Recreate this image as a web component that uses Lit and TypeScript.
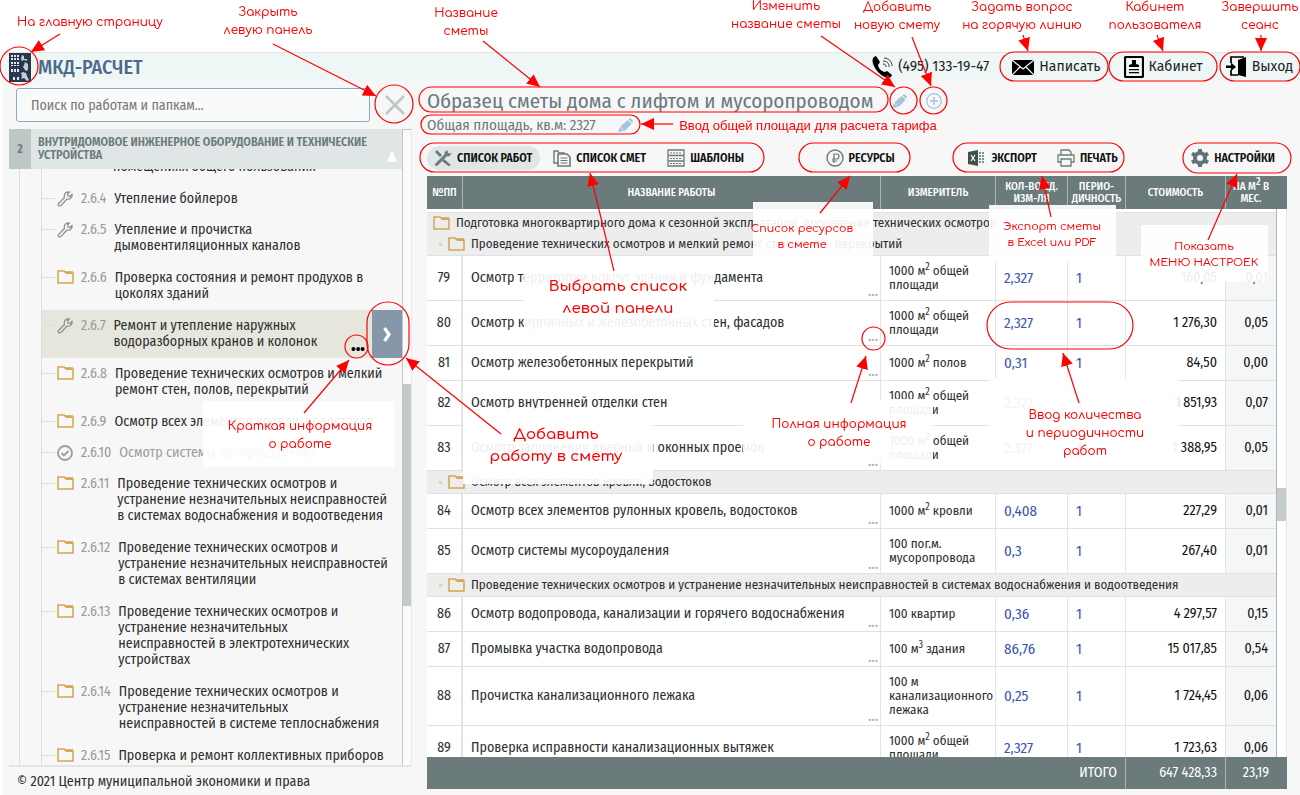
import { LitElement, html, css, svg, nothing } from "lit";
import { customElement, property } from "lit/decorators.js";
import { classMap } from "lit/directives/class-map.js";

type Kind = "wrench" | "folder" | "done";
interface TreeItem { kind: Kind; num: string; lines: string[]; active?: boolean }
interface WorkRow { n: number; name: string; unit: unknown; qty: string; per: string; cost: string; rate: string }
interface GroupRow { group: string; level: number }
interface Note { x: number; y: number; lines: string[]; style?: "big" | "tight" | "plain"; card?: [number, number, number, number] }

const tree: TreeItem[] = [
  { kind: "wrench", num: "2.6.4", lines: ["Утепление бойлеров"] },
  { kind: "wrench", num: "2.6.5", lines: ["Утепление и прочистка", "дымовентиляционных каналов"] },
  { kind: "folder", num: "2.6.6", lines: ["Проверка состояния и ремонт продухов в", "цоколях зданий"] },
  { kind: "wrench", num: "2.6.7", lines: ["Ремонт и утепление наружных", "водоразборных кранов и колонок"], active: true },
  { kind: "folder", num: "2.6.8", lines: ["Проведение технических осмотров и мелкий", "ремонт стен, полов, перекрытий"] },
  { kind: "folder", num: "2.6.9", lines: ["Осмотр всех элементов кровли, водостоков"] },
  { kind: "done", num: "2.6.10", lines: ["Осмотр системы мусороудаления"] },
  { kind: "folder", num: "2.6.11", lines: ["Проведение технических осмотров и", "устранение незначительных неисправностей", "в системах водоснабжения и водоотведения"] },
  { kind: "folder", num: "2.6.12", lines: ["Проведение технических осмотров и", "устранение незначительных неисправностей", "в системах вентиляции"] },
  { kind: "folder", num: "2.6.13", lines: ["Проведение технических осмотров и", "устранение незначительных", "неисправностей в электротехнических", "устройствах"] },
  { kind: "folder", num: "2.6.14", lines: ["Проведение технических осмотров и", "устранение незначительных", "неисправностей в системе теплоснабжения"] },
  { kind: "folder", num: "2.6.15", lines: ["Проверка и ремонт коллективных приборов"] },
];

const area = html`1000 м<sup>2</sup> общей<br />площади`;
const rows: (WorkRow | GroupRow)[] = [
  { group: "Подготовка многоквартирного дома к сезонной эксплуатации, проведение технических осмотров", level: 0 },
  { group: "Проведение технических осмотров и мелкий ремонт стен, полов, перекрытий", level: 1 },
  { n: 79, name: "Осмотр территории вокруг здания и фундамента", unit: area, qty: "2,327", per: "1", cost: "160,05", rate: "0,01" },
  { n: 80, name: "Осмотр кирпичных и железобетонных стен, фасадов", unit: area, qty: "2,327", per: "1", cost: "1 276,30", rate: "0,05" },
  { n: 81, name: "Осмотр железобетонных перекрытий", unit: html`1000 м<sup>2</sup> полов`, qty: "0,31", per: "1", cost: "84,50", rate: "0,00" },
  { n: 82, name: "Осмотр внутренней отделки стен", unit: area, qty: "2,327", per: "1", cost: "1 851,93", rate: "0,07" },
  { n: 83, name: "Осмотр заполнения дверных и оконных проемов", unit: area, qty: "2,327", per: "1", cost: "1 388,95", rate: "0,05" },
  { group: "Осмотр всех элементов кровли, водостоков", level: 1 },
  { n: 84, name: "Осмотр всех элементов рулонных кровель, водостоков", unit: html`1000 м<sup>2</sup> кровли`, qty: "0,408", per: "1", cost: "227,29", rate: "0,01" },
  { n: 85, name: "Осмотр системы мусороудаления", unit: html`100 пог.м.<br />мусоропровода`, qty: "0,3", per: "1", cost: "267,40", rate: "0,01" },
  { group: "Проведение технических осмотров и устранение незначительных неисправностей в системах водоснабжения и водоотведения", level: 1 },
  { n: 86, name: "Осмотр водопровода, канализации и горячего водоснабжения", unit: "100 квартир", qty: "0,36", per: "1", cost: "4 297,57", rate: "0,15" },
  { n: 87, name: "Промывка участка водопровода", unit: html`100 м<sup>3</sup> здания`, qty: "86,76", per: "1", cost: "15 017,85", rate: "0,54" },
  { n: 88, name: "Прочистка канализационного лежака", unit: html`100 м<br />канализационного<br />лежака`, qty: "0,25", per: "1", cost: "1 724,45", rate: "0,06" },
  { n: 89, name: "Проверка исправности канализационных вытяжек", unit: area, qty: "2,327", per: "1", cost: "1 723,63", rate: "0,06" },
];

const notes: Note[] = [
  { x: 90, y: 22, lines: ["На главную страницу"] },
  { x: 268, y: 21, lines: ["Закрыть", "левую панель"] },
  { x: 466, y: 22, lines: ["Название", "сметы"] },
  { x: 786, y: 15, lines: ["Изменить", "название сметы"] },
  { x: 897, y: 16, lines: ["Добавить", "новую смету"] },
  { x: 1022, y: 16, lines: ["Задать вопрос", "на горячую линию"] },
  { x: 1155, y: 16, lines: ["Кабинет", "пользователя"] },
  { x: 1260, y: 16, lines: ["Завершить", "сеанс"] },
  { x: 808, y: 126, lines: ["Ввод общей площади для расчета тарифа"], style: "plain" },
  { x: 618, y: 298, lines: ["Выбрать список", "левой панели"], style: "big", card: [524, 266, 190, 72] },
  { x: 802, y: 237, lines: ["Список ресурсов", "в смете"], style: "tight", card: [753, 202, 120, 55] },
  { x: 1052, y: 235, lines: ["Экспорт сметы", "в Excel или PDF"], style: "tight", card: [989, 205, 127, 57] },
  { x: 1204, y: 255, lines: ["Показать", "МЕНЮ НАСТРОЕК"], style: "tight", card: [1141, 225, 127, 57] },
  { x: 300, y: 435, lines: ["Краткая информация", "о работе"], card: [203, 401, 191, 66] },
  { x: 556, y: 446, lines: ["Добавить", "работу в смету"], style: "big", card: [463, 408, 190, 76] },
  { x: 839, y: 433, lines: ["Полная информация", "о работе"], card: [743, 399, 190, 64] },
  { x: 1085, y: 433, lines: ["Ввод количества", "и периодичности", "работ"], card: [989, 378, 190, 92] },
];

const rings: [number, number, number, number][] = [
  [0, 47, 38, 38], [375, 85, 38, 38], [419, 87, 469, 25], [421, 115, 219, 19],
  [890, 87, 27, 27], [920, 87, 27, 27], [420, 143, 344, 29], [799, 143, 111, 29],
  [953, 143, 171, 29], [1183, 143, 108, 30], [1000, 52, 108, 29], [1109, 52, 108, 29],
  [1220, 52, 80, 29], [367, 302, 42, 63], [345, 335, 23, 23], [862, 327, 23, 23], [987, 302, 146, 47],
];

const arrows: [number, number, number, number][] = [
  [60, 34, 31, 52], [273, 44, 376, 96], [483, 41, 540, 87], [821, 36, 895, 87], [912, 37, 931, 86],
  [1023, 35, 1028, 51], [1157, 35, 1163, 51], [1261, 35, 1261, 51], [673, 124, 641, 124],
  [614, 271, 590, 173], [820, 213, 850, 176], [1051, 217, 1042, 176], [1208, 240, 1237, 174],
  [304, 413, 349, 360], [501, 434, 406, 358], [851, 403, 866, 356], [1079, 403, 1063, 353],
];

const icons: Record<string, unknown> = {
  logo: svg`<rect width="22" height="29" fill="#2b3750"/><g fill="#dfe8f0"><path d="M2 2h2v2H2zM5 2h2v2H5zM8 2h2v2H8zM2 5h2v2H2zM5 5h2v2H5zM8 5h2v2H8zM2 9h2v2H2zM5 9h2v2H5zM8 9h2v2H8zM2 12h2v1H2zM5 12h2v1H5zM8 12h2v1H8zM2 16h2v3H2zM5 16h2v3H5zM8 16h2v3H8zM4 24h2v3H4zM8 24h2v3H8z"/><path d="M13 2l2 1v3h3v2l-3-1-2 1-1-2zM16 9l3 2v5l-1 2-2-1-2-3 1-2zM14 19l3 1 1 3 2 4-2 1-3-3-3 1 1-3-1-3z" opacity=".85"/></g>`,
  phone: svg`<path fill="#000" d="M3 2l2-1 4 6-2 3c0 3 4 7 7 7l2-1 5 4-1 2c-3 2-8 0-12-4S-1 6 3 2z"/><g fill="none" stroke="#333" stroke-width="1"><path d="M12 9c2 0 3 1 3 3M12 6c4 0 6 2 6 6M13 3c5 0 8 4 8 8"/></g>`,
  mail: svg`<path fill="#000" d="M0 0h22v15H0z"/><path fill="none" stroke="#fff" stroke-width="1.2" d="M0 0l11 9L22 0M0 15l8-8M22 15l-8-8"/>`,
  card: svg`<rect x="1" y="1" width="18" height="20" rx="1" fill="none" stroke="#000" stroke-width="2.2"/><path d="M8 4h4v4l3 1v2H5V9l3-1zM5 13h10v1.200H5zM5 16h10v1.200H5z"/>`,
  exit: svg`<path d="M12 4l8-3v20l-8-2z"/><path fill="none" stroke="#000" stroke-width="1.700" d="M5 7V1h13M5 14v5h7"/><path d="M0 9.500h5V6.500l5 4.500-5 4v-3H0z"/>`,
  close: svg`<path d="M1 1l18 18M19 1L1 19" stroke="#bcc7c6" stroke-width="2.6"/>`,
  pencil: svg`<path fill="#a3c4dc" d="M0 14l2-5 4 4zM2.500 8.500l7-6.500 4 4-7 7zM10.500 1.500L12 0q2.500 1 3 3.500L14 5z"/>`,
  plus: svg`<circle cx="8" cy="8" r="7.3" fill="none" stroke="#a3c4dc" stroke-width="1.3"/><path d="M8 4v8M4 8h8" stroke="#a3c4dc" stroke-width="1.5"/>`,
  tools: svg`<path d="M1 3l2-2 5 5-2 2zM10 10l6 5q1 2-1 2-1 0-7-5z" fill="#6b7b7c"/><path d="M2.500 15.500L12 6" stroke="#6b7b7c" stroke-width="3" stroke-linecap="round"/><path d="M14 1l-3.500 2 .5 4 4 .5L18 4l-3 .5L13.500 3z" fill="#6b7b7c"/>`,
  docs: svg`<path d="M5 14H1V2h4l1 2h6" fill="none" stroke="#6b7b7c" stroke-width="1.4"/><path d="M5 5h9l3 3v9H5z" fill="#f7f7f7" stroke="#6b7b7c" stroke-width="1.6"/><path d="M7.500 9h7M7.500 11.500h7M7.500 14h7" stroke="#6b7b7c"/>`,
  templ: svg`<path d="M1 1h16v16H1zM1 6.500h16M1 12h16" fill="none" stroke="#6b7b7c" stroke-width="1.300"/><path d="M3 4h12M3 9.500h12M3 14.500h12" stroke="#6b7b7c" stroke-dasharray="2 1"/>`,
  ruble: svg`<circle cx="9" cy="9" r="8" fill="none" stroke="#6b7b7c" stroke-width="1.400"/><path d="M8 14V5h3q2 0 2 2.500T10.500 10H6M6 12h5" fill="none" stroke="#6b7b7c" stroke-width="1.200"/>`,
  excel: svg`<path d="M0 3l10-2v16L0 15z" fill="#3d5446"/><path d="M3 6l4 6M7 6l-4 6" stroke="#fff" stroke-width="1.200"/><path d="M12 3v12M15 3v12" stroke="#7f9488" stroke-width="2" stroke-dasharray="2 1"/>`,
  print: svg`<path d="M4 6V1h8l2 2v3M4 13H1V6h16v7h-3M4 10h10v7H4z" fill="none" stroke="#6b7b7c" stroke-width="1.300"/>`,
  gear: svg`<circle cx="9" cy="9" r="5" fill="none" stroke="#5f7577" stroke-width="4"/><g stroke="#5f7577" stroke-width="4"><path d="M9 0v4M9 14v4M1 4.500l3.500 2M13.500 11.500l3.500 2M1 13.500l3.500-2M13.500 6.500l3.500-2"/></g>`,
  folder: svg`<path d="M1 1h6l2 2h7v10H1z" fill="none" stroke="#d0a64e" stroke-width="1.500"/><path d="M8 1h8v3h-7z" fill="#d0a64e" fill-opacity=".75"/>`,
  wrench: svg`<path d="M1.500 12.500L7.500 6.500Q6.500 3.500 9 1.500q2-1 3.500-.5L10.500 3l.5 2 2 .500 2-2q.5 2-1 3.500-2 1.800-4 1L4 14.500q-1.500.800-2.500 0-.800-1 0-2z" fill="none" stroke="#8b8d8d" stroke-width="1.200"/>`,
  done: svg`<circle cx="8" cy="8" r="7" fill="none" stroke="#9b9d9d" stroke-width="1.800"/><path d="M4.500 8l2.500 2.500L11.500 6" fill="none" stroke="#9b9d9d" stroke-width="1.800"/>`,
  next: svg`<path d="M1.500 1L6 7.500 1.500 14" fill="none" stroke="#fff" stroke-width="3.200"/>`,
};

const icon = (name: string, w: number, h: number) =>
  html`<svg width=${w} height=${h} viewBox="0 0 ${w} ${h}" aria-hidden="true">${icons[name]}</svg>`;

const base = css`
  * { box-sizing: border-box; }
  :host { box-sizing: border-box; font-family: "Fira Sans Condensed", "Roboto Condensed", Roboto, sans-serif; color: #2d2f30; }
  svg { display: block; flex: none; }
  button { font: inherit; color: inherit; background: none; border: 0; padding: 0; margin: 0; cursor: pointer; }
  a { color: inherit; text-decoration: none; }
`;

@customElement("work-tree")
export class WorkTree extends LitElement {
  static styles = [base, css`
    :host { position: relative; display: flex; flex-direction: column; min-height: 0; border-bottom: 2px solid #e4e6e6; }
    .head { display: flex; height: 40px; flex: none; margin-right: 10px; background: #dfe6e5; color: #6b7b7c; font-size: 12px; line-height: 13px; font-weight: 600; }
    .idx { width: 22px; background: #bcc7c6; display: grid; place-items: center; }
    .title { flex: 1; padding: 7px 0 0 7px; }
    .up { align-self: end; margin: 0 5px 7px 0; width: 10px; height: 12px; background: #fff; clip-path: polygon(50% 0, 100% 100%, 0 100%); }
    .view { flex: 1; min-height: 0; overflow: hidden; margin: 0 10px 0 10px; border-left: 1px solid #dcdfe0; padding-left: 21px; }
    ul { list-style: none; margin: -10px 0 0; padding: 0; border-left: 1px solid #dcdfe0; font-size: 14px; line-height: 16px; }
    li { display: flex; padding: 8px 0; position: relative; color: #2d2f30; }
    li.short { padding-bottom: 7px; }
    li.rest { padding: 0 0 8px 71px; }
    li.active { background: #e6e6dd; }
    li.finished { color: #9b9d9d; }
    .tick { width: 14px; height: 1px; margin-top: 7px; background: #dcdfe0; }
    .ico { width: 18px; display: grid; justify-items: center; align-content: start; }
    .num { color: #999; margin: 0 8px 0 7px; }
    .text { white-space: nowrap; }
    .add { position: absolute; right: 0; top: 0; bottom: 0; width: 30px; background: #8797aa; display: grid; place-items: center; }
    .more { position: absolute; right: 37px; bottom: 0; color: #000; font-weight: 700; font-size: 14px; }
    .bar { position: absolute; top: 0; right: 0; bottom: 0; width: 10px; background: #fafafa; border-left: 1px solid #bcc7c6; border-top: 1px solid #bcc7c6; border-right: 1px solid #e8eaea; }
    .thumb { position: absolute; left: 0; right: 0; top: 40%; height: 35%; background: #c3cccb; }
  `];
  render() {
    return html`
      <div class="head"><span class="idx">2</span><span class="title">ВНУТРИДОМОВОЕ ИНЖЕНЕРНОЕ ОБОРУДОВАНИЕ И ТЕХНИЧЕСКИЕ<br />УСТРОЙСТВА</span><span class="up"></span></div>
      <div class="view"><ul>
        <li class="rest">помещениях общего пользования</li>
        ${tree.map(t => html`<li class=${classMap({ active: !!t.active, finished: t.kind === "done", short: t.lines.length === 1 })}>
          <span class="tick"></span>
          <span class="ico">${t.kind === "folder" ? icon("folder", 17, 14) : icon(t.kind, 16, 16)}</span>
          <span class="num">${t.num}</span>
          <span class="text">${t.lines.map((l, i) => html`${i ? html`<br />` : nothing}${l}`)}</span>
          ${t.active ? html`<button class="more" aria-label="Краткая информация">•••</button><button class="add" aria-label="Добавить работу">${icon("next", 8, 15)}</button>` : nothing}
        </li>`)}
      </ul></div>
      <div class="bar"><div class="thumb"></div></div>`;
  }
}

@customElement("estimate-table")
export class EstimateTable extends LitElement {
  static styles = [base, css`
    :host { position: relative; display: block; min-height: 0; overflow: hidden; background: #fff; }
    table { width: 100%; table-layout: fixed; border-collapse: separate; border-spacing: 0; font-size: 14px; }
    .c-n { width: 36px; } .c-u { width: 115px; } .c-q { width: 72px; } .c-p { width: 58px; } .c-c { width: 100px; } .c-r { width: 61px; }
    thead { position: sticky; top: 0; z-index: 2; }
    th { height: 33px; padding: 0; background: #6b7b7c; color: #fff; font-size: 11px; line-height: 12px; font-weight: 500; border-right: 1px solid #a9b4b4; }
    th:last-child { border: 0; padding-right: 11px; }
    td { height: 35px; padding: 8px 8px; border-right: 1px solid #e2e4e5; border-bottom: 1px solid #dfe1e2; line-height: 18px; vertical-align: middle; }
    .n { text-align: center; padding: 0; border-right-width: 2px; }
    .w { position: relative; padding: 0 8px 0 8px; white-space: nowrap; }
    .u { font-size: 13px; line-height: 14px; white-space: nowrap; }
    sup { font-size: 10px; line-height: 0; vertical-align: 5px; }
    .v { color: #3c54b0; font-size: 15px; padding: 0 8px; }
    .v input { width: 100%; border: 0; padding: 0; background: none; font: inherit; color: inherit; outline: 0; }
    .c { text-align: right; color: #111; padding: 0 8px; }
    .r { text-align: right; color: #111; padding: 0 19px 0 0; background: #f5f6f8; border-right: 0; }
    .more { position: absolute; right: 2px; bottom: 0; line-height: 8px; font-size: 11px; color: #aab2b8; }
    .gap td { height: 4px; padding: 0; border-right: 0; }
    .group td { height: 23px; padding: 0 6px; background: #ededee; font-size: 13px; line-height: 20px; border-right: 0; white-space: nowrap; }
    .group.first td { height: 20px; border-bottom: 0; }
    .g { display: flex; align-items: center; gap: 6px; }
    .g.sub { padding-left: 6px; }
    .g.sub::before { content: ""; width: 3px; height: 3px; background: #e6d3a8; }
    tfoot { position: sticky; bottom: 0; z-index: 2; }
    tfoot td { height: 32px; background: #6b7b7c; color: #fff; font-size: 14px; text-align: right; padding: 0 8px; border: 0; border-right: 1px solid #a9b4b4; }
    tfoot td:last-child { border: 0; padding-right: 18px; }
    .bar { position: absolute; z-index: 1; top: 33px; bottom: 32px; right: 0; width: 11px; background: #fff; border-left: 1px solid #a9b8b8; border-right: 1px solid #e6e8e8; }
    .thumb { position: absolute; left: 0; right: 0; top: 51%; height: 6%; background: #c3cccb; }
  `];
  private row(r: WorkRow | GroupRow) {
    if ("group" in r) {
      return html`<tr class="group ${r.level ? "" : "first"}"><td colspan="7"><div class=${classMap({ g: true, sub: r.level > 0 })}>${icon("folder", 17, 14)}<span>${r.group}</span></div></td></tr>`;
    }
    return html`<tr>
      <td class="n">${r.n}</td>
      <td class="w">${r.name}<button class="more" aria-label="Полная информация">•••</button></td>
      <td class="u">${r.unit}</td>
      <td class="v"><input aria-label="Количество ${r.n}" .value=${r.qty} /></td>
      <td class="v"><input aria-label="Периодичность ${r.n}" .value=${r.per} /></td>
      <td class="c">${r.cost}</td><td class="r">${r.rate}</td></tr>`;
  }
  render() {
    return html`<table>
      <colgroup><col class="c-n" /><col /><col class="c-u" /><col class="c-q" /><col class="c-p" /><col class="c-c" /><col class="c-r" /></colgroup>
      <thead><tr><th>№ПП</th><th>НАЗВАНИЕ РАБОТЫ</th><th>ИЗМЕРИТЕЛЬ</th><th>КОЛ-ВО ЕД.<br />ИЗМ-ЛЯ</th><th>ПЕРИО-<br />ДИЧНОСТЬ</th><th>СТОИМОСТЬ</th><th>НА М<sup>2</sup> В<br />МЕС.</th></tr></thead>
      <tbody><tr class="gap"><td colspan="7"></td></tr>${rows.map(r => this.row(r))}</tbody>
      <tfoot><tr><td colspan="5">ИТОГО</td><td>647 428,33</td><td>23,19</td></tr></tfoot>
    </table><div class="bar"><div class="thumb"></div></div>`;
  }
}

@customElement("help-notes")
export class HelpNotes extends LitElement {
  static styles = [base, css`
    :host { position: absolute; inset: 0; z-index: 10; pointer-events: none; overflow: hidden; }
    svg { position: absolute; left: 0; top: 0; overflow: visible; }
    .ring { fill: none; stroke: #f00; stroke-width: 1.2; }
    .line { stroke: #f00; stroke-width: 1.2; }
    .card { position: absolute; background: #fff; opacity: .92; }
    .note { position: absolute; transform: translate(-50%, -50%); white-space: nowrap; text-align: center; color: #f00; font: 500 12px/18px Comfortaa, Inter, sans-serif; }
    .big { font-size: 15px; line-height: 22px; font-weight: 600; }
    .tight { font-size: 11px; line-height: 16px; }
    .plain { font: 13px/18px "Liberation Sans", Arial, sans-serif; }
  `];
  render() {
    return html`
      ${notes.map(n => n.card ? html`<div class="card" style="left:${n.card[0]}px;top:${n.card[1]}px;width:${n.card[2]}px;height:${n.card[3]}px"></div>` : nothing)}
      <svg width="100%" height="100%" aria-hidden="true">
        <defs><marker id="tip" viewBox="0 0 13 12" refX="13" refY="6" markerWidth="13" markerHeight="12" markerUnits="userSpaceOnUse" orient="auto"><path d="M0 0l13 6-13 6z" fill="#f00" /></marker></defs>
        ${rings.map(([x, y, w, h]) => svg`<rect class="ring" x=${x} y=${y} width=${w} height=${h} rx=${Math.min(w, h) / 2} />`)}
        ${arrows.map(([a, b, c, d]) => svg`<line class="line" x1=${a} y1=${b} x2=${c} y2=${d} marker-end="url(#tip)" />`)}
      </svg>
      ${notes.map(n => html`<div class="note ${n.style ?? ""}" style="left:${n.x}px;top:${n.y}px">${n.lines.map((l, i) => html`${i ? html`<br />` : nothing}${l}`)}</div>`)}`;
  }
}

@customElement("app-root")
export class AppRoot extends LitElement {
  @property() phone = "(495) 133-19-47";
  static styles = [base, css`
    :host { position: relative; display: flex; flex-direction: column; height: 100vh; overflow: hidden; background: #fff; padding-top: 52px; }
    .page { flex: 1; min-height: 0; display: flex; flex-direction: column; background: #f7f7f7; margin-left: 2px; }
    header { height: 29px; flex: none; display: flex; align-items: center; padding: 0 7px 0 7px; background: #eef6f6; border-top: 1px solid #dde5e5; }
    .brand { display: flex; align-items: center; gap: 7px; font-size: 20px; line-height: 28px; font-weight: 500; color: #4d6a8c; margin-right: auto; }
    .menu { display: flex; align-items: center; font: 14px/28px "Fira Sans", "Fira Sans Condensed", Roboto, sans-serif; color: #222; }
    .menu > * { display: flex; align-items: center; gap: 5px; margin-left: 23px; }
    .body { flex: 1; min-height: 0; display: grid; grid-template-columns: 403px 1fr; grid-template-rows: minmax(0, 1fr); column-gap: 15px; padding: 0 13px 0 7px; }
    .left { display: flex; flex-direction: column; min-height: 0; }
    .search { display: flex; align-items: center; gap: 15px; padding: 7px 7px 7px 7px; }
    .search input { flex: 1; min-width: 0; height: 34px; border: 1px solid #8fa9c4; border-radius: 3px; background: #f9fafa; padding: 0 14px; font: inherit; font-size: 14px; color: #333; }
    .search input::placeholder { color: #777; opacity: 1; }
    work-tree { flex: 1; }
    footer { height: 28px; flex: none; padding-left: 8px; font-size: 14px; line-height: 30px; }
    .right { display: flex; flex-direction: column; min-height: 0; padding-bottom: 6px; }
    .title { display: flex; align-items: center; height: 36px; padding-top: 4px; color: #6b7b7c; gap: 19px; }
    h1 { margin: 0; font-size: 21px; line-height: 26px; font-weight: 400; }
    .area { display: flex; align-items: center; gap: 22px; height: 16px; color: #6b7b7c; font-size: 15px; line-height: 16px; }
    .tools { display: flex; justify-content: space-between; align-items: center; height: 43px; padding: 8px 12px 1px 0; font-size: 12px; line-height: 24px; font-weight: 600; color: #111; }
    .tools div { display: flex; gap: 20px; }
    .tools button { display: flex; align-items: center; gap: 5px; }
    .tabs button { padding: 0 8px 0 7px; border-radius: 12px; }
    .tools .tabs { gap: 6px; }
    .tabs .on { background: #dfe6e5; }
    estimate-table { flex: 1; }
  `];
  render() {
    return html`
      <div class="page">
        <header>
          <a class="brand" href="#">${icon("logo", 22, 29)}МКД-РАСЧЕТ</a>
          <nav class="menu">
            <a href="tel:+74951331947">${icon("phone", 22, 24)}${this.phone}</a>
            <a href="#mail">${icon("mail", 22, 15)}Написать</a>
            <a href="#cabinet">${icon("card", 20, 22)}Кабинет</a>
            <a href="#exit">${icon("exit", 21, 22)}Выход</a>
          </nav>
        </header>
        <div class="body">
          <section class="left">
            <div class="search"><input type="search" aria-label="Поиск" placeholder="Поиск по работам и папкам..." /><button aria-label="Закрыть левую панель">${icon("close", 20, 20)}</button></div>
            <work-tree></work-tree>
            <footer>© 2021 Центр муниципальной экономики и права</footer>
          </section>
          <main class="right">
            <div class="title"><h1>Образец сметы дома с лифтом и мусоропроводом</h1><button aria-label="Изменить название">${icon("pencil", 15, 14)}</button><button aria-label="Новая смета">${icon("plus", 16, 16)}</button></div>
            <div class="area"><span>Общая площадь, кв.м: 2327</span><button aria-label="Изменить площадь">${icon("pencil", 15, 14)}</button></div>
            <div class="tools">
              <div class="tabs"><button class="on">${icon("tools", 18, 18)}СПИСОК РАБОТ</button><button>${icon("docs", 18, 18)}СПИСОК СМЕТ</button><button>${icon("templ", 18, 18)}ШАБЛОНЫ</button></div>
              <div><button>${icon("ruble", 18, 18)}РЕСУРСЫ</button></div>
              <div><button>${icon("excel", 18, 18)}ЭКСПОРТ</button><button>${icon("print", 18, 18)}ПЕЧАТЬ</button></div>
              <div><button>${icon("gear", 18, 18)}НАСТРОЙКИ</button></div>
            </div>
            <estimate-table></estimate-table>
          </main>
        </div>
      </div>
      <help-notes></help-notes>`;
  }
}
